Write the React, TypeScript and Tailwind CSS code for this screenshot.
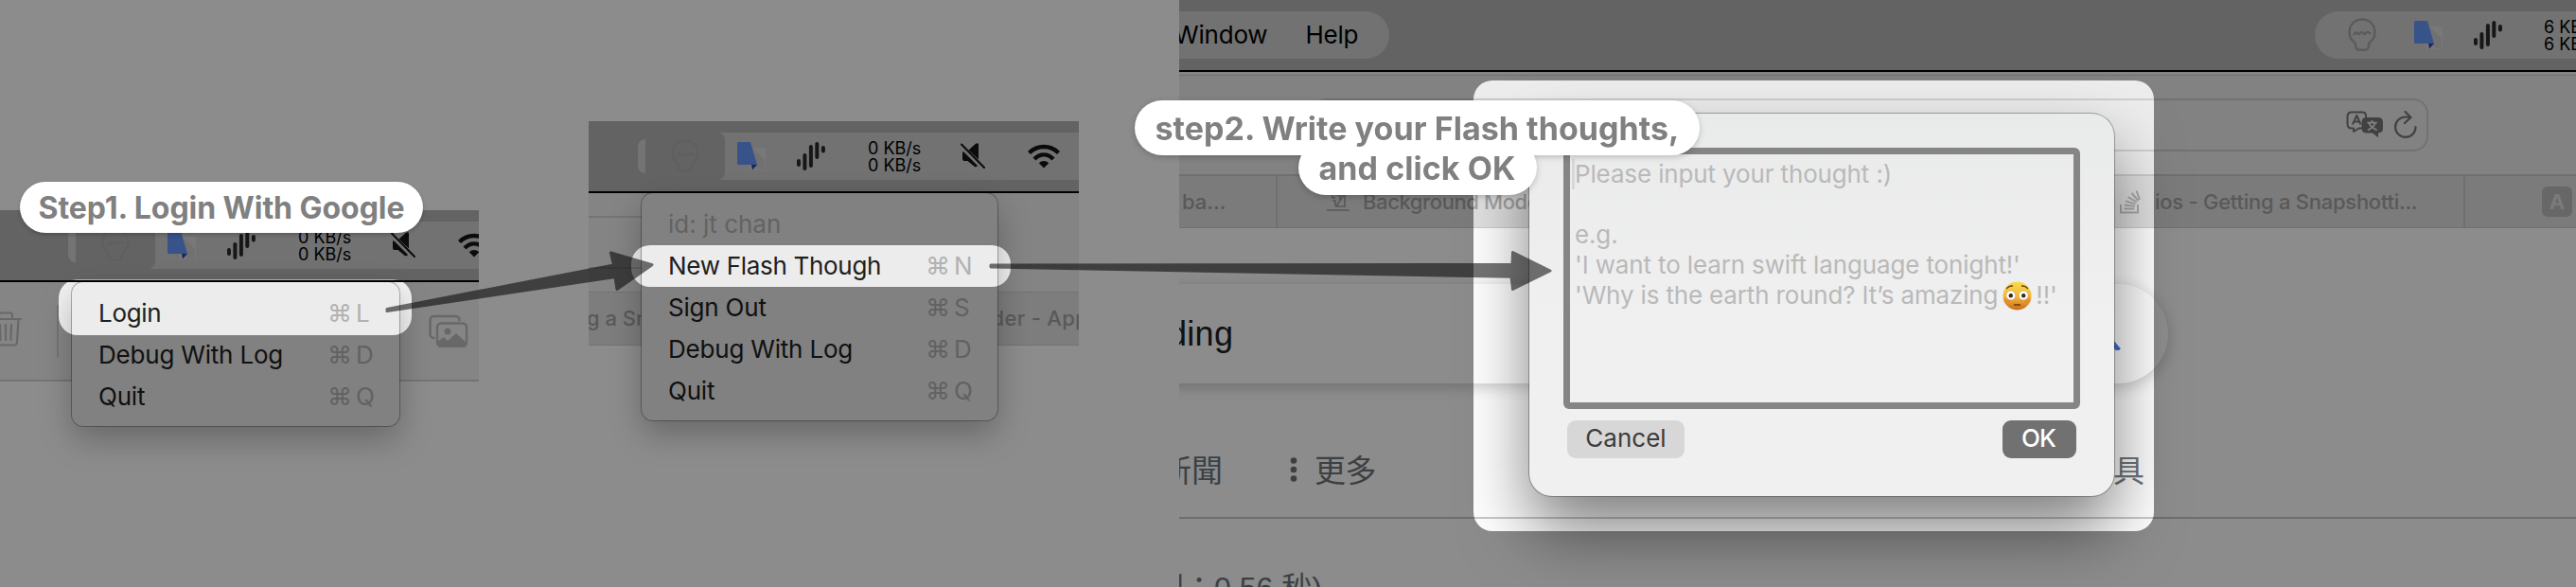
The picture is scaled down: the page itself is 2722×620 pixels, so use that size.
import type { ReactNode } from "react";

const Skull = ({ className }: { className: string }) => (
  <svg width="30" height="36" viewBox="0 0 30 36" fill="none" stroke="currentColor" strokeWidth="2.4" strokeLinecap="round" strokeLinejoin="round" className={className}>
    <path d="M15 1.5C7.5 1.500 1.500 7 1.500 15c0 5 2 8.200 5 10.200 1.200.9 1.500 2 1.700 4.300.2 3 1.300 4.300 3.800 4.300h6c2.500 0 3.600-1.300 3.800-4.300.2-2.300.5-3.400 1.700-4.300 3-2 5-5.200 5-10.200C28.500 7 22.500 1.500 15 1.500Z" />
    <path d="M6.500 17.500c1.200-2 2.500-2.700 3.700-1.200 1 1.200 1.700 1.200 2.600-.2 1-1.500 2.200-1.700 3.400-.1 1 1.300 1.700 1.200 2.600 0 1.200-1.600 2.700-2 4.700.3" />
  </svg>
);

const Translate = () => (
  <svg width="30" height="30" viewBox="0 0 30 30">
    <rect x="13" y="6" width="17" height="24" rx="1" fill="#dadada" />
    <path d="M16 6l13 13v10H21z" fill="#cecece" />
    <path d="M15 24h6l-5 5.600z" fill="#2d45a5" />
    <path d="M1.500 0H14l7 24H1.500Q0 24 0 22.500v-21Q0 0 1.500 0z" fill="#6796fb" />
  </svg>
);

const Bars = () => (
  <svg width="30" height="30" viewBox="0 0 30 30" stroke="#2b2b2b" strokeWidth="4" strokeLinecap="round">
    <path d="M2 20v4M8.400 14v14M14.900 5v20M21.300 2v14M27.900 6v3.500" />
  </svg>
);

const Mute = () => (
  <svg width="26" height="27" viewBox="0 0 26 27" fill="#141414">
    <path d="M8.500 7.500 16 .8Q19 -.8 19 2v15.500z" />
    <path d="M2 9.500h1.500L18 24q-1.500 2-3.500.7L7.500 19H4q-2 0-2-2z" />
    <path d="M1 1.500 25 26" stroke="#141414" strokeWidth="2" strokeLinecap="round" />
  </svg>
);

const Wifi = () => (
  <svg width="34" height="26" viewBox="0 0 34 26" fill="none" stroke="#141414" strokeWidth="4.400" className="shrink-0">
    <path d="M1.500 9.500Q8 3 17 3t15.500 6.500" />
    <path d="M7 16q4.500-4.600 10-4.600T27 16" />
    <path d="M17 25.500l-5.300-5.200Q14 18 17 18t5.300 2.300z" fill="#141414" stroke="none" />
  </svg>
);

const Rate = ({ n, className }: { n: number; className: string }) => (
  <div className={`shrink-0 whitespace-nowrap pt-[2px] text-[18px] leading-[18px] text-black ${className}`}>
    <div>{n} KB/s</div>
    <div>{n} KB/s</div>
  </div>
);

function StatusBar({ lead }: { lead: string }) {
  return (
    <div className="flex h-[76px] items-center border-b-2 border-black bg-[#b5b5b5] pb-px">
      <div className={`flex h-[50px] w-full items-center ${lead}`}>
        <div className="h-9 w-2 shrink-0 rounded-l-full bg-[#d4d4d4]" />
        <div className="flex h-[50px] flex-1 items-center bg-[#cfcfcf]">
          <div className="flex h-[50px] w-[84px] shrink-0 items-center justify-center rounded-br-[8px] rounded-tr-[8px] bg-[#b5b5b5]">
            <Skull className="text-[#adadad]" />
          </div>
          <div className="ml-[13px] shrink-0"><Translate /></div>
          <div className="ml-[33px] shrink-0"><Bars /></div>
          <Rate n={0} className="ml-[45px]" />
          <div className="ml-[42px] shrink-0"><Mute /></div>
          <div className="ml-[45px] shrink-0"><Wifi /></div>
        </div>
      </div>
    </div>
  );
}

type Item = { label: string; hotkey?: string; tracking?: string };

function Menu({ items, className }: { items: Item[]; className: string }) {
  return (
    <div className={`absolute rounded-[12px] bg-[#ececec] py-[10px] shadow-[0_0_0_1px_rgba(0,0,0,0.28),0_14px_34px_rgba(0,0,0,0.26)] ${className}`}>
      {items.map((it) => (
        <div key={it.label} className="flex h-11 items-center justify-between whitespace-nowrap pl-[28px] pt-[2px] text-[26px] leading-[44px]">
          <span className={`${it.hotkey ? "text-[#202020]" : "text-[#b4b4b4]"} ${it.tracking ?? "tracking-[-0.2px]"}`}>{it.label}</span>
          {it.hotkey && (
            <span className="flex w-[76px] text-[#b2b2b2]">
              <span className="w-[30px]">⌘</span>
              <span>{it.hotkey}</span>
            </span>
          )}
        </div>
      ))}
    </div>
  );
}

function LoginWindow() {
  return (
    <div className="absolute left-0 top-[222px] h-[182px] w-[506px]">
      <div className="h-full overflow-hidden">
        <StatusBar lead="pl-[72px]" />
        <div className="flex h-[105px] items-start border-b-2 border-[#d4d4d4] bg-[#f2f2f2] pt-[24px]">
          <svg width="24" height="40" viewBox="0 0 24 40" fill="none" stroke="#bdbdbd" strokeWidth="2.200" strokeLinecap="round" strokeLinejoin="round" className="mt-[6px]">
            <path d="M-11 9H22M-1 8V5q0-2.500 2.500-2.500h9Q13 2.500 13 5v3M19.500 9.500 18 33.500q-.3 3-3 3H-4M0 15l.5 16M6 15v16M12 15l-.6 16" />
          </svg>
          <div className="ml-[36px] h-[56px] w-[2px] bg-[#d2d2d2]" />
          <svg width="42" height="36" viewBox="0 0 42 36" className="ml-[391px] mt-[10px]">
            <rect x="1.500" y="2" width="31" height="23" rx="4" fill="none" stroke="#bdbdbd" strokeWidth="2.400" />
            <rect x="9" y="9.500" width="31" height="24" rx="4" fill="#f2f2f2" stroke="#f2f2f2" strokeWidth="5" />
            <rect x="9" y="9.500" width="31" height="24" rx="4" fill="none" stroke="#bdbdbd" strokeWidth="2.400" />
            <circle cx="20" cy="18" r="3.500" fill="#bdbdbd" />
            <path d="M9 29l7-5 4 4 9-8 11 10v3q-1 2-3 2H12q-3-1-3-3z" fill="#bdbdbd" />
          </svg>
        </div>
      </div>
      <Menu
        className="left-[76px] top-[76px] w-[346px]"
        items={[
          { label: "Login", hotkey: "L", tracking: "tracking-[-0.3px]" },
          { label: "Debug With Log", hotkey: "D" },
          { label: "Quit", hotkey: "Q" },
        ]}
      />
    </div>
  );
}

function AccountWindow() {
  return (
    <div className="absolute left-[622px] top-[128px] h-[237px] w-[518px]">
      <div className="h-full overflow-hidden">
        <StatusBar lead="pl-[52px]" />
        <div className="h-[104px] bg-[#f0f0f0] pt-[24px]">
          <div className="h-[56px] w-[120px] border-y-2 border-[#d4d4d4]" />
        </div>
        <div className="flex h-[57px] items-center justify-between border-y border-[#cfcfcf] bg-[#e4e4e4] text-[22px] font-medium text-[#a3a3a3]">
          <span className="-ml-[2px]">g a Snap</span>
          <span className="-mr-[10px] tracking-[0.3px]">ader - App</span>
        </div>
      </div>
      <Menu
        className="left-[56px] top-[76px] w-[376px]"
        items={[
          { label: "id: jt chan", tracking: "tracking-[0px]" },
          { label: "New Flash Though", hotkey: "N", tracking: "tracking-[-0.3px]" },
          { label: "Sign Out", hotkey: "S" },
          { label: "Debug With Log", hotkey: "D" },
          { label: "Quit", hotkey: "Q" },
        ]}
      />
    </div>
  );
}

const Flushed = () => (
  <svg width="31" height="31" viewBox="0 0 31 31" className="ml-[5px] mr-[4px]">
    <defs>
      <linearGradient id="face" x1="0" y1="0" x2="0" y2="1">
        <stop offset="0" stopColor="#f7dc4c" />
        <stop offset="0.55" stopColor="#f2b53b" />
        <stop offset="1" stopColor="#c96a18" />
      </linearGradient>
    </defs>
    <circle cx="15.500" cy="15.500" r="15" fill="url(#face)" />
    <ellipse cx="4.500" cy="20" rx="3.500" ry="3" fill="#e8742c" opacity=".35" />
    <ellipse cx="26.500" cy="20" rx="3.500" ry="3" fill="#e8742c" opacity=".35" />
    <circle cx="8.800" cy="15" r="5" fill="#fff" stroke="#c99a3a" strokeWidth=".6" />
    <circle cx="22.200" cy="15" r="5" fill="#fff" stroke="#c99a3a" strokeWidth=".6" />
    <circle cx="8.800" cy="15.200" r="2.200" fill="#3b2a1a" />
    <circle cx="22.200" cy="15.200" r="2.200" fill="#3b2a1a" />
    <path d="M4.500 7.500q2.500-2.800 6-2.500M26.500 7.500q-2.500-2.800-6-2.500M12.500 25h6" fill="none" stroke="#6b3a10" strokeWidth="1.400" strokeLinecap="round" />
  </svg>
);

function ThoughtDialog() {
  return (
    <div className="absolute left-[370px] top-[120px] flex h-[404px] w-[618px] flex-col rounded-[24px] bg-[#f0f0f0] bg-[linear-gradient(#e9eaea,#f0f0f0_55%)] pl-[36px] pr-[36px] pt-[36px] shadow-[0_0_0_1px_rgba(0,0,0,0.3),0_36px_70px_rgba(0,0,0,0.5)]">
      <div className="h-[276px] w-[546px] whitespace-nowrap rounded-[6px] border-[7px] border-[#858585] pl-[5px] pt-[5px] text-[26px] leading-[32px] tracking-[-0.14px] text-[#b9b9b9]">
        <div className="-ml-[3px] border-l-[3px] border-[#d8d8d8]">Please input your thought :)</div>
        <div className="h-8" />
        <div>e.g.</div>
        <div>'I want to learn swift language tonight!'</div>
        <div className="flex items-center tracking-[-0.16px]">
          'Why is the earth round? It’s amazing<Flushed />!!'
        </div>
      </div>
      <div className="mt-[12px] flex justify-between px-1 text-[26px] leading-[38px]">
        <div className="h-10 w-[124px] rounded-[9px] bg-[#d7d7d7] text-center text-[#3c3c3c]">Cancel</div>
        <div className="h-10 w-[78px] rounded-[9px] bg-[#717171] pr-[2px] text-center font-medium tracking-[-0.8px] text-white">OK</div>
      </div>
    </div>
  );
}

function BrowserWindow() {
  return (
    <div className="absolute left-[1246px] top-0 h-[620px] w-[1476px]">
      <div className="flex h-full flex-col overflow-hidden bg-white">
        <div className="flex h-[76px] shrink-0 items-start justify-between border-b-2 border-black bg-[#b5b5b5] pt-[12px]">
          <div className="flex h-[50px] w-[222px] items-center rounded-r-full bg-[#cfcfcf] pb-px text-[26px] tracking-[-0.2px] text-black">
            <span className="-ml-[5px]">Window</span>
            <span className="ml-[40px]">Help</span>
          </div>
          <div className="flex h-[50px] w-[276px] items-center overflow-hidden rounded-l-full bg-[#cfcfcf] pl-[35px]">
            <Skull className="shrink-0 text-[#a6a6a6]" />
            <div className="ml-[40px] shrink-0"><Translate /></div>
            <div className="ml-[33px] shrink-0"><Bars /></div>
            <Rate n={6} className="ml-[44px]" />
          </div>
        </div>
        <div className="h-[4px] shrink-0 border-b border-[#cccccc] bg-[#f0f0f0]" />
        <div className="h-[104px] shrink-0 bg-[#ededed] pt-[24px]">
          <div className="ml-[140px] flex h-[56px] w-[1180px] items-center justify-end rounded-[16px] border-2 border-[#cfcfcf] pr-[9px]">
            <svg width="40" height="30" viewBox="0 0 40 30" fill="none" stroke="#777" strokeWidth="2" strokeLinejoin="round">
              <path d="M6 1.500h11q4 0 4 4v9q0 4-4 4h-3.500L8 22v-3.500H6q-4.500 0-4.500-4.500V6q0-4.500 4.500-4.500z" />
              <path d="M7 14.500 11.300 5l4.200 9.500M8.500 11.500h6" />
              <path d="M21 7.500h13.500q4 0 4 4v7.500q0 4-4 4H33.500V27.500L28 23h-7q-4 0-4-4v-7.500q0-4 4-4z" fill="#777" stroke="#777" strokeWidth="1" />
              <path d="M27.500 10v2.200M22.500 12.700h10.200M31 13q-2 4.500-8 7.500M24.200 13q2 4.500 8.500 7.500" stroke="#ededed" strokeWidth="1.800" />
            </svg>
            <svg width="26" height="30" viewBox="0 0 26 30" fill="none" stroke="#777" strokeWidth="2.200" strokeLinecap="round" strokeLinejoin="round" className="ml-[10px]">
              <path d="M23.500 17A10.700 10.700 0 1 1 13 6.500q3 0 5 .8M12.500 1l6 6-6.500 6" />
            </svg>
          </div>
        </div>
        <div className="flex h-[57px] shrink-0 items-center border-b border-t-2 border-b-[#cdcdcd] border-t-[#cacaca] bg-[#e0e0e0] text-[22px] font-medium text-[#a3a3a3]">
          <div className="h-full w-[104px] border-r-2 border-[#cdcdcd] pl-[3px] leading-[55px]">ba...</div>
          <div className="flex h-full w-[626px] items-center border-r-2 border-[#cdcdcd] pl-[52px]">
            <svg width="24" height="26" viewBox="0 0 24 26" fill="none" stroke="#a0a0a0" strokeWidth="1.600">
              <path d="M6 1h13v17H9M19 4l-9 14M6 4v5h3M9 6h5v5M12 3l3 4M6 12h3v6M0 22h24" />
            </svg>
            <span className="ml-[14px] tracking-[-0.4px]">Background Modes</span>
          </div>
          <div className="flex h-full w-[629px] items-center border-r-2 border-[#cdcdcd] pl-[264px]">
            <svg width="22" height="26" viewBox="0 0 22 26" fill="none" stroke="#a9a9a9" strokeWidth="2">
              <path d="M1 16v8.500h18V16M4.500 20.500h11M4.800 16.600l11 1.200M6 12.400l10.500 3M8.500 8l9.400 5.500M12.500 4l7 8M17.500 1.500 21 11" />
            </svg>
            <span className="ml-[15px] whitespace-nowrap tracking-[-0.26px]">ios - Getting a Snapshotti...</span>
          </div>
          <div className="ml-[81px] h-8 w-8 rounded-[6px] bg-[#bcbcbc] text-center text-[22px] font-bold leading-[33px] text-[#e0e0e0]">A</div>
        </div>
        <div className="-ml-[60px] mt-[59px] flex h-[105px] w-[1105px] shrink-0 items-center justify-between rounded-r-full pl-[48px] pr-[50px] shadow-[0_4px_16px_rgba(0,0,0,0.2)]">
          <span className="font-['Liberation_Sans'] text-[36px] tracking-[0.3px] text-[#202124]">ding</span>
          <svg width="34" height="34" viewBox="0 0 34 34" fill="none" stroke="#4572d8" strokeWidth="5">
            <circle cx="13" cy="13" r="10" />
            <path d="M20 20 32 34" />
          </svg>
        </div>
        <div className="flex h-[143px] shrink-0 items-center border-b-2 border-[#c9c9c9] pt-[39px] font-['Noto_Sans_CJK_TC',sans-serif] text-[33px] leading-[44px] text-[#70757a]">
          <span className="-ml-[20px] w-[66px] whitespace-nowrap">新聞</span>
          <svg width="8" height="26" viewBox="0 0 8 26" fill="currentColor" className="ml-[71px] mt-[2px]">
            <circle cx="4" cy="3.500" r="3.300" />
            <circle cx="4" cy="13" r="3.300" />
            <circle cx="4" cy="22.500" r="3.300" />
          </svg>
          <span className="ml-[18px] tracking-[-0.5px]">更多</span>
          <span className="ml-[746px]">工具</span>
        </div>
        <div className="-ml-[27px] mt-[57px] h-8 shrink-0 whitespace-nowrap font-['Liberation_Sans','Noto_Sans_CJK_TC',sans-serif] text-[32px] leading-[32px] text-[#70757a]">
          間：0.56 秒)
        </div>
      </div>
      <ThoughtDialog />
    </div>
  );
}

const Pill = ({ children, className }: { children: ReactNode; className: string }) => (
  <div className={`flex items-center justify-center whitespace-nowrap rounded-full bg-white font-bold text-[#808080] ${className}`}>{children}</div>
);

function Annotations() {
  return (
    <div className="absolute inset-0">
      <svg width="2722" height="620" viewBox="0 0 2722 620" className="absolute inset-0">
        <path
          fill="#000"
          fillOpacity=".452"
          fillRule="evenodd"
          d="M0 0H2722V620H0ZM82 295H415a20 20 0 0 1 20 20v19a20 20 0 0 1-20 20H82a20 20 0 0 1-20-20v-19a20 20 0 0 1 20-20ZM687 259h361a20 20 0 0 1 20 20v4a20 20 0 0 1-20 20H687a20 20 0 0 1-20-20v-4a20 20 0 0 1 20-20ZM1577 85h679a20 20 0 0 1 20 20v436a20 20 0 0 1-20 20H1577a20 20 0 0 1-20-20V105a20 20 0 0 1 20-20Z"
        />
      </svg>
      <svg width="2722" height="620" viewBox="0 0 2722 620" className="absolute inset-0 opacity-[.54]" stroke="#000" strokeWidth="3" strokeLinejoin="round">
        <path d="M409 326.500 648.500 280 645.500 267 689 279.700 652 305.500 650 292.500 409 328.500Z" />
        <path d="M1047 280 1598 279.500 1598.500 266.500 1638 286 1598.500 305.500 1597 292.300 1047 282Z" />
      </svg>
      <Pill className="absolute left-[21px] top-[192px] h-[54px] w-[426px] pt-px text-[32px] tracking-[-0.05px] shadow-[0_2px_4px_rgba(0,0,0,0.2)]">
        <span>Step1. Login With Google</span>
      </Pill>
      <div className="absolute left-[1199px] top-[106px] flex w-[597px] flex-col items-center text-[34px] tracking-[0.05px] drop-shadow-[0_2px_3px_rgba(0,0,0,0.2)]">
        <Pill className="z-10 h-[58px] w-[597px]">step2. Write your Flash thoughts,</Pill>
        <Pill className="-mt-[16px] h-[58px] w-[252px]">and click OK</Pill>
      </div>
    </div>
  );
}

export default function App() {
  return (
    <div className="relative h-[620px] w-[2722px] overflow-hidden bg-white font-['Inter',sans-serif]">
      <LoginWindow />
      <AccountWindow />
      <BrowserWindow />
      <Annotations />
    </div>
  );
}
